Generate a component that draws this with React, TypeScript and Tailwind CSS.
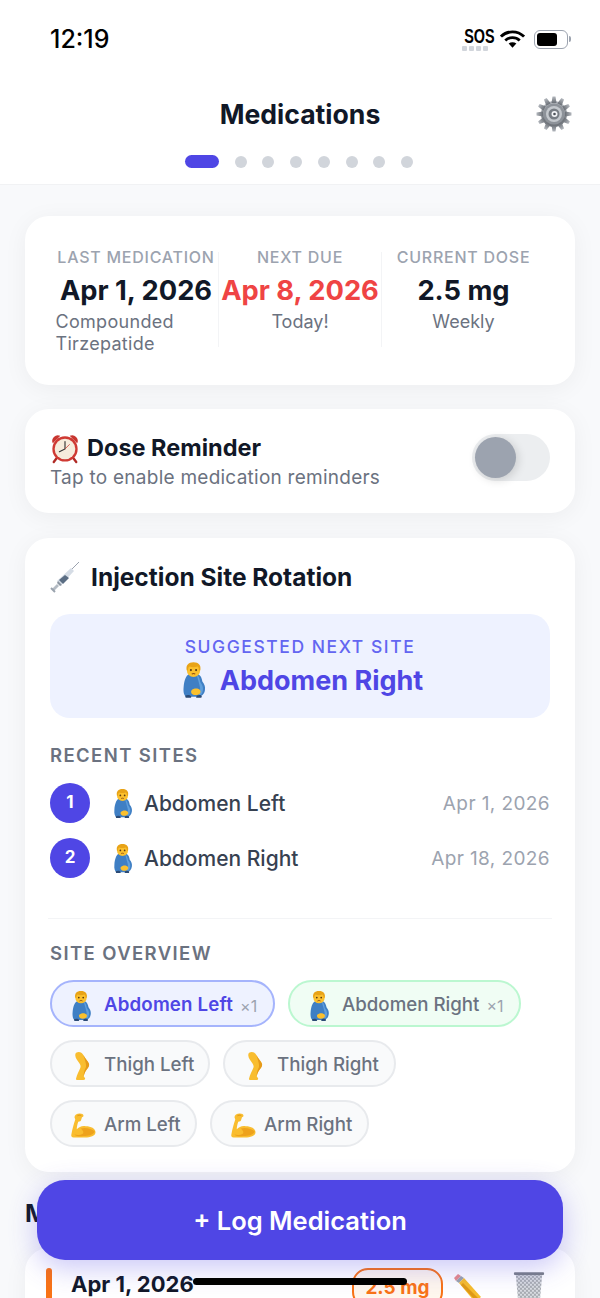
import React from "react";

const PregnantMan = ({ className }: { className: string }) => (
  <svg viewBox="0 0 24 34" className={className}>
    <path d="M5 33c-2-1-3-4-2.500-9 .5-6 2-11 5-12.500h9c2.500 1 3.500 4 4 7 2 2.500 3 5 2.500 8-.5 4-3 6-6 6.500z" fill="#3f7fc4" />
    <path d="M15 12c2 .5 3 4 3.500 7 2 2.500 3 5 2.500 8-.5 3-2 5-5 6 2-3 3-7 2-10-1-4-2-8-3-11z" fill="#5f9fdc" />
    <path d="M4 32c2-1 5-1 6 1l-.5 1H4.500zM15 32c2-1 4-1 5 .5l-.5 1.500h-5z" fill="#2b4a75" />
    <path d="M10 27c2-2.500 7-2.500 8.500 0 1 2-1 4.500-4.500 4.500S9 29 10 27z" fill="#fbc02d" />
    <circle cx="12" cy="7.500" r="6.500" fill="#fbc02d" />
    <path d="M5.500 7.500C4.500 3 7 0 12 0s7.500 3 6.500 7.500l-1.200.5c0-2-.5-3.500-1.500-4-2.500 1-5.500 1-7.600 0-1 .5-1.500 2-1.500 4z" fill="#e8a317" />
    <circle cx="9.500" cy="7.500" r="1" fill="#5b3a12" />
    <circle cx="14.500" cy="7.500" r="1" fill="#5b3a12" />
    <path d="M10.300 11.300c1-.7 2.400-.7 3.400 0" stroke="#8a4b12" strokeWidth="1" fill="none" />
  </svg>
);

const Leg = ({ className }: { className: string }) => (
  <svg viewBox="0 0 20 34" className={className}>
    <path d="M2.500 1.500C5.500-.5 9 .5 11 4c2 4 5.500 7.500 6.500 10 .7 2 0 3.500-1 5-2.500 3-4.500 6.500-5 10l1.500 2.500c.5 1-.5 2-2 2H3.500c-1 0-1.500-.7-1-2 1-4.500 3.500-9 5-12.500.7-2 0-3.500-1-5C4.500 11 1.500 7.500 1.500 4.500c0-1.500.3-2.500 1-3z" fill="#f9bd2f" />
    <path d="M11 4c2 4 5.500 7.500 6.500 10 .7 2 0 3.500-1 5-2.500 3-4.500 6.500-5 10-.5-4 1-7.500 2.500-10.500C15 15 12.500 9 11 4z" fill="#e69a1a" />
  </svg>
);

const Arm = ({ className }: { className: string }) => (
  <svg viewBox="0 0 36 34" className={className}>
    <path d="M5 33c-3 0-4-2-3-5 1-6 3-13 5-19l-1-3c0-3 3-5 7-5 3 0 5 1 5 3 0 1-1 2-2 2l-1 3c0 2-2 3-4 3-1 3-2 7-2 10 3-3 7-5 12-4 7 0 13 3 13 8 0 5-7 7-14 7z" fill="#f9bd2f" />
    <path d="M14 21c6-2 15 0 19 4-2 5-9 6-15 6-6 1-11 0-12-2 3 1 8 1 11-1 2-2 0-5-3-7z" fill="#eea21c" />
    <path d="M10 4c2-1 4-1 5 0" stroke="#d98c14" strokeWidth="1.200" fill="none" />
  </svg>
);

const Gear = () => (
  <svg viewBox="0 0 36 36" className="w-[36px] h-[36px]">
    <defs>
      <linearGradient id="g1" x1="0" y1="0" x2="0" y2="1">
        <stop offset="0" stopColor="#b4b8be" />
        <stop offset="1" stopColor="#6a6f76" />
      </linearGradient>
    </defs>
    <g fill="url(#g1)">
      <circle cx="18" cy="18" r="13" />
      {[0, 30, 60, 90, 120, 150, 180, 210, 240, 270, 300, 330].map((a) => (
        <path key={a} d="M15.500 7L16.500 .5h3L20.500 7z" transform={`rotate(${a} 18 18)`} />
      ))}
    </g>
    <circle cx="18" cy="18" r="10.500" fill="#8d9299" />
    <circle cx="18" cy="18" r="8" fill="#c4c8cd" />
    <circle cx="18" cy="18" r="5.500" fill="#787d84" />
    <circle cx="18.500" cy="18" r="3" fill="#f3f4f6" />
    <circle cx="18.500" cy="18" r="1.300" fill="#4b5057" />
  </svg>
);

const Clock = () => (
  <svg viewBox="0 0 32 34" className="w-[30px] h-[32px] shrink-0">
    <path d="M3 12a6 6 0 0 1 8-8zM29 12a6 6 0 0 0-8-8z" fill="#c8352f" />
    <path d="M7 28l-3 4M25 28l3 4" stroke="#b02a25" strokeWidth="2.500" strokeLinecap="round" />
    <circle cx="16" cy="18" r="13.500" fill="#cf3a33" />
    <circle cx="16" cy="18" r="11" fill="#f6ecdc" />
    <path d="M16 10v8l-6 3" stroke="#333" strokeWidth="1.200" fill="none" strokeLinecap="round" />
    <path d="M16 18l5-5" stroke="#c8352f" strokeWidth=".8" />
  </svg>
);

const Syringe = () => (
  <svg viewBox="0 0 30 32" className="w-[30px] h-[32px] shrink-0">
    <path d="M29 1L20 10" stroke="#9ca3af" strokeWidth="1" />
    <path d="M21 7l3 3-13 14-4-4z" fill="#d5dce5" />
    <path d="M15 14l4 3-6 6-4-4z" fill="#5a6d83" />
    <path d="M8 20l4 4-2 1-3-3z" fill="#8b95a1" />
    <path d="M7 23l2 2-5 5-2-2z" fill="#b4bbc4" />
    <path d="M1 27l4 4" stroke="#9aa3ae" strokeWidth="2" />
  </svg>
);

const Pencil = () => (
  <svg viewBox="0 0 32 32" className="w-[32px] h-[32px]">
    <path d="M3 6l4-4 3 2-5 5z" fill="#e88b8b" />
    <path d="M5 9l5-5 3 2-5 5z" fill="#9aa3ad" />
    <path d="M8 11l5-5 17 19-6 5z" fill="#f7bd2b" />
    <path d="M10 13l2-2 16 16-3 2z" fill="#e09a14" />
  </svg>
);

const Trash = () => (
  <svg viewBox="0 0 34 40" className="w-[32px] h-[38px]">
    <defs>
      <pattern id="mesh" width="3" height="3" patternUnits="userSpaceOnUse" patternTransform="rotate(45)">
        <rect width="3" height="3" fill="#dfe2e6" />
        <path d="M0 0h3M0 0v3" stroke="#7b8087" strokeWidth="1" />
      </pattern>
    </defs>
    <path d="M3 3h28l-3 34H6z" fill="url(#mesh)" />
    <rect x="1" y="0" width="32" height="3" rx="1" fill="#7b8087" />
  </svg>
);

const Chip = ({
  icon,
  label,
  count,
  tone,
  width,
}: {
  icon: React.ReactNode;
  label: string;
  count?: boolean;
  tone: "blue" | "green" | "gray";
  width: string;
}) => {
  const toneClass =
    tone === "blue"
      ? "border-[#a5b4fc] bg-[#eef2ff] text-[#4f46e5] font-semibold tracking-[0.15px]"
      : tone === "green"
        ? "border-[#bbf7d0] bg-[#f0fdf4] text-[#6b7280] font-medium"
        : "border-[#e8eaed] bg-[#f9fafb] text-[#6b7280] font-medium";
  return (
    <div className={`h-[47px] rounded-full border-2 flex items-center pl-[18px] pt-[4px] text-[18.700px] ${toneClass} ${width}`}>
      <span className="flex justify-start items-center w-[34px] shrink-0">{icon}</span>
      <span>{label}</span>
      {count && <span className="ml-[7px] text-[16px] font-normal text-[#9ca3af]">×1</span>}
    </div>
  );
};

export default function App() {
  return (
    <div className="relative w-[600px] h-[1298px] overflow-hidden bg-[#f8f9fb] [font-family:Inter,sans-serif]">
      <header className="h-[185px] bg-white border-b border-[#f1f2f4] flex flex-col">
        <div className="flex items-center justify-between pl-[50px] pr-[29px] pt-[24px] h-[54px]">
          <span className="text-[25px] font-medium text-black leading-none">12:19</span>
          <div className="flex items-center">
            <div className="flex flex-col items-center mr-[10px]">
              <span className="text-[20px] font-bold leading-[17px] text-black scale-x-[0.72] w-[30px] text-center [font-family:'Liberation_Sans',sans-serif]">SOS</span>
              <div className="flex gap-[2px] mt-[1px]">
                <span className="w-[5px] h-[5px] rounded-[1px] bg-[#d1d5db]" />
                <span className="w-[5px] h-[5px] rounded-[1px] bg-[#d1d5db]" />
                <span className="w-[5px] h-[5px] rounded-[1px] bg-[#d1d5db]" />
                <span className="w-[5px] h-[5px] rounded-[1px] bg-[#d1d5db]" />
              </div>
            </div>
            <svg viewBox="0 0 26 20" className="w-[25px] h-[20px] mr-[9px]">
              <path d="M1 7.500a17 17 0 0 1 24 0" stroke="#000" strokeWidth="3" fill="none" />
              <path d="M5.500 11.500a11 11 0 0 1 15 0" stroke="#000" strokeWidth="3" fill="none" />
              <path d="M13 19l-4-4.200a6 6 0 0 1 8 0z" fill="#000" />
            </svg>
            <div className="flex items-center gap-[1px]">
              <div className="w-[34px] h-[19px] rounded-[6px] border border-[#9ca3af] p-[2px]">
                <div className="w-[20px] h-full rounded-[3px] bg-black" />
              </div>
              <div className="w-[2px] h-[6px] rounded-r bg-[#9ca3af]" />
            </div>
          </div>
        </div>
        <div className="relative mt-[36px] h-[48px] flex items-center justify-center">
          <h1 className="text-[26.600px] font-bold text-[#111827] leading-none">Medications</h1>
          <div className="absolute right-[28px] top-[6px]">
            <Gear />
          </div>
        </div>
        <div className="flex items-center justify-center gap-[15.700px] mt-[17px] pr-[2px]">
          <span className="w-[34px] h-[13px] rounded-full bg-[#4f46e5]" />
          {[1, 2, 3, 4, 5, 6, 7].map((i) => (
            <span key={i} className="w-[12px] h-[12px] rounded-full bg-[#d1d5db]" />
          ))}
        </div>
      </header>

      <main className="px-[25px] pt-[31px] flex flex-col">
        <section className="h-[169px] rounded-[24px] bg-white shadow-[0_4px_24px_rgba(0,0,0,0.05)] px-[25px] pt-[36px] flex items-start">
          <div className="w-[169px] h-[95px] pl-[4px] flex flex-col items-center border-r border-[#f3f4f6]">
            <span className="-mt-[5px] text-[16px] font-medium tracking-[0.75px] text-[#9ca3af] leading-[20px] whitespace-nowrap">LAST MEDICATION</span>
            <span className="text-[27.300px] font-bold text-[#111827] leading-[36px] mt-[6px] whitespace-nowrap">Apr 1, 2026</span>
            <span className="w-[157px] -ml-[4px] text-[18px] text-[#6b7280] leading-[22px] mt-[2px] tracking-[0.3px]">Compounded Tirzepatide</span>
          </div>
          <div className="w-[163px] h-[95px] flex flex-col items-center border-r border-[#f3f4f6]">
            <span className="-mt-[5px] text-[16px] font-medium tracking-[0.75px] text-[#9ca3af] leading-[20px]">NEXT DUE</span>
            <span className="text-[27.300px] font-bold text-[#ef4444] leading-[36px] mt-[6px] whitespace-nowrap">Apr 8, 2026</span>
            <span className="text-[18px] text-[#6b7280] leading-[22px] mt-[2px]">Today!</span>
          </div>
          <div className="w-[163px] h-[95px] flex flex-col items-center">
            <span className="-mt-[5px] text-[16px] font-medium tracking-[0.75px] text-[#9ca3af] leading-[20px]">CURRENT DOSE</span>
            <span className="text-[27.300px] font-bold text-[#111827] leading-[36px] mt-[6px] whitespace-nowrap">2.5 mg</span>
            <span className="text-[18px] text-[#6b7280] leading-[22px] mt-[2px]">Weekly</span>
          </div>
        </section>

        <section className="mt-[24px] h-[104px] rounded-[24px] bg-white shadow-[0_4px_24px_rgba(0,0,0,0.05)] px-[25px] flex items-center justify-between">
          <div>
            <div className="flex items-center gap-[7px]">
              <Clock />
              <span className="text-[23.500px] font-bold text-[#111827] leading-[30px]">Dose Reminder</span>
            </div>
            <p className="text-[19px] text-[#6b7280] leading-[24px] mt-[2px] tracking-[0.25px]">Tap to enable medication reminders</p>
          </div>
          <div className="w-[78px] h-[47px] mb-[8px] rounded-full bg-[#eceef0] flex items-center pl-[3px]">
            <span className="w-[41px] h-[41px] rounded-full bg-[#9ca3af] shadow-[2px_2px_10px_rgba(0,0,0,0.15)]" />
          </div>
        </section>

        <section className="mt-[25px] h-[634px] rounded-[24px] bg-white shadow-[0_4px_24px_rgba(0,0,0,0.05)] px-[25px] pt-[23px]">
          <div className="flex items-center gap-[11px] h-[32px]">
            <Syringe />
            <h2 className="text-[24.500px] font-bold text-[#111827] leading-none">Injection Site Rotation</h2>
          </div>
          <div className="mt-[21px] h-[104px] rounded-[20px] bg-[#eef2ff] flex flex-col items-center pt-[21px]">
            <span className="text-[17.500px] font-medium tracking-[1.550px] text-[#6366f1] leading-[24px]">SUGGESTED NEXT SITE</span>
            <div className="flex items-center gap-[14px] h-[38px] mt-[2px] pl-[4px]">
              <PregnantMan className="w-[25px] h-[36px]" />
              <span className="text-[27px] font-bold text-[#4f46e5] leading-none">Abdomen Right</span>
            </div>
          </div>

          <h3 className="mt-[25px] text-[18.500px] font-semibold tracking-[1.400px] text-[#6b7280] leading-[24px]">RECENT SITES</h3>
          <div className="mt-[16px] flex flex-col gap-[15px]">
            {[
              ["1", "Abdomen Left", "Apr 1, 2026"],
              ["2", "Abdomen Right", "Apr 18, 2026"],
            ].map(([n, site, date]) => (
              <div key={n} className="flex items-center h-[40px]">
                <span className="w-[40px] h-[40px] rounded-full bg-[#4f46e5] text-white font-bold text-[17px] flex items-center justify-center">{n}</span>
                <span className="ml-[22px] w-[33px] shrink-0">
                  <PregnantMan className="w-[21px] h-[29px]" />
                </span>
                <span className="text-[21px] font-medium text-[#374151] -ml-[1px] mt-[2px]">{site}</span>
                <span className="ml-auto text-[19px] text-[#9ca3af] tracking-[0.4px] mt-[3px]">{date}</span>
              </div>
            ))}
          </div>

          <div className="mt-[40px] -mx-[2px] h-px bg-[#f3f4f6]" />
          <h3 className="mt-[22px] text-[18.500px] font-semibold tracking-[1.400px] text-[#6b7280] leading-[24px]">SITE OVERVIEW</h3>
          <div className="mt-[15px] flex flex-col gap-[13px]">
            <div className="flex gap-[13px]">
              <Chip tone="blue" width="w-[225px]" label="Abdomen Left" count icon={<PregnantMan className="w-[22px] h-[30px]" />} />
              <Chip tone="green" width="w-[233px]" label="Abdomen Right" count icon={<PregnantMan className="w-[22px] h-[30px]" />} />
            </div>
            <div className="flex gap-[13px]">
              <Chip tone="gray" width="w-[160px]" label="Thigh Left" icon={<Leg className="w-[17px] h-[30px] ml-[4px]" />} />
              <Chip tone="gray" width="w-[173px]" label="Thigh Right" icon={<Leg className="w-[17px] h-[30px] ml-[4px]" />} />
            </div>
            <div className="flex gap-[13px]">
              <Chip tone="gray" width="w-[147px]" label="Arm Left" icon={<Arm className="w-[27px] h-[29px]" />} />
              <Chip tone="gray" width="w-[159px]" label="Arm Right" icon={<Arm className="w-[27px] h-[29px]" />} />
            </div>
          </div>
        </section>

        <h2 className="mt-[26px] text-[24.500px] font-bold text-[#111827] leading-[30px]">Medication History</h2>

        <section className="mt-[20px] h-[100px] rounded-[24px] bg-white shadow-[0_4px_24px_rgba(0,0,0,0.05)] pl-[21px] pr-[30px] pt-[20px] flex items-start">
          <span className="w-[6px] h-[60px] rounded-full bg-[#f97316] shrink-0" />
          <span className="ml-[19px] text-[22px] font-bold text-[#111827] leading-[32px]">Apr 1, 2026</span>
          <span className="ml-auto h-[40px] w-[91px] rounded-[16px] border-2 border-[#f97316] bg-[#fff7ed] text-[#f97316] text-[19px] font-bold flex items-center justify-center">2.5 mg</span>
          <span className="ml-[8px] mt-[4px] mr-[30px]"><Pencil /></span>
          <span className="mt-[4px]"><Trash /></span>
        </section>
      </main>

      <button className="absolute left-[37px] top-[1180px] w-[526px] h-[80px] pt-[2px] rounded-[28px] bg-[#4f46e5] text-white text-[25.500px] font-semibold shadow-[0_8px_28px_rgba(79,70,229,0.3)]">
        + Log Medication
      </button>
      <div className="absolute left-[193px] top-[1278px] w-[214px] h-[7px] rounded-full bg-black" />
    </div>
  );
}
